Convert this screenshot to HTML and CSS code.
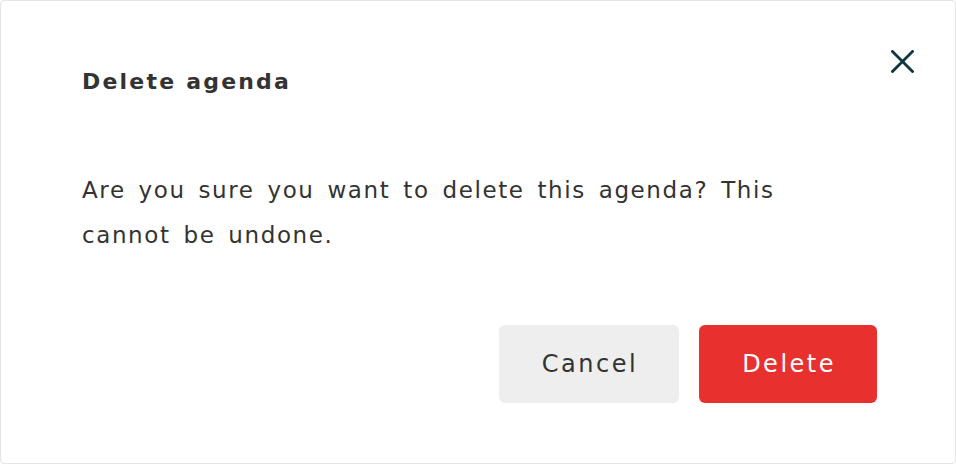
FILE: index.html
```html
<!DOCTYPE html>
<html lang="en">
<head>
<meta charset="utf-8">
<title>Delete agenda</title>
<link rel="stylesheet" href="styles.css">
</head>
<body>
<div class="dialog" role="dialog" aria-labelledby="dlg-title">
  <div class="dialog-header">
    <h2 class="dialog-title" id="dlg-title">Delete agenda</h2>
    <button class="close-btn" aria-label="Close">
      <svg width="23" height="23" viewBox="0 0 23 23" aria-hidden="true">
        <path d="M1.5 1.5 L21.5 21.5 M21.5 1.5 L1.5 21.5" stroke="#0f3442" stroke-width="2.8" stroke-linecap="square" fill="none"/>
      </svg>
    </button>
  </div>
  <p class="dialog-text">Are you sure you want to delete this agenda? This cannot be undone.</p>
  <div class="dialog-actions">
    <button class="btn btn-cancel">Cancel</button>
    <button class="btn btn-delete">Delete</button>
  </div>
</div>
</body>
</html>
```
FILE: styles.css
```css
html, body {
  margin: 0;
  padding: 0;
  background: #ffffff;
}

body {
  font-family: "DejaVu Sans", "Open Sans", sans-serif;
  color: #333333;
}

.dialog {
  box-sizing: border-box;
  width: 956px;
  height: 464px;
  border: 1px solid #e4e4e4;
  border-radius: 4px;
  background: #ffffff;
  display: flex;
  flex-direction: column;
}

.dialog-header {
  display: flex;
  justify-content: space-between;
  align-items: flex-start;
  padding: 49px 41px 0 81px;
}

.dialog-title {
  margin: 16px 0 0 0;
  font-size: 22px;
  line-height: 32px;
  font-weight: 700;
  letter-spacing: 2.2px;
  color: #333333;
}

.close-btn {
  border: 0;
  background: none;
  padding: 0;
  margin: 0;
  width: 23px;
  height: 23px;
  cursor: pointer;
  display: block;
}

.close-btn svg {
  display: block;
}

.dialog-text {
  margin: 70px 0 0 81px;
  max-width: 730px;
  font-size: 23px;
  line-height: 45px;
  letter-spacing: 1.6px;
  word-spacing: 4px;
  color: #333333;
}

.dialog-actions {
  display: flex;
  justify-content: flex-end;
  gap: 20px;
  padding: 0 78px 0 0;
  margin-top: 67px;
}

.btn {
  height: 78px;
  border: 0;
  border-radius: 6px;
  padding: 0 41px 0 43px;
  font-family: "DejaVu Sans", "Open Sans", sans-serif;
  font-size: 24px;
  letter-spacing: 2.5px;
  cursor: pointer;
}

.btn-cancel {
  background: #eeeeee;
  color: #333333;
}

.btn-delete {
  background: #e8312f;
  color: #ffffff;
}
```
